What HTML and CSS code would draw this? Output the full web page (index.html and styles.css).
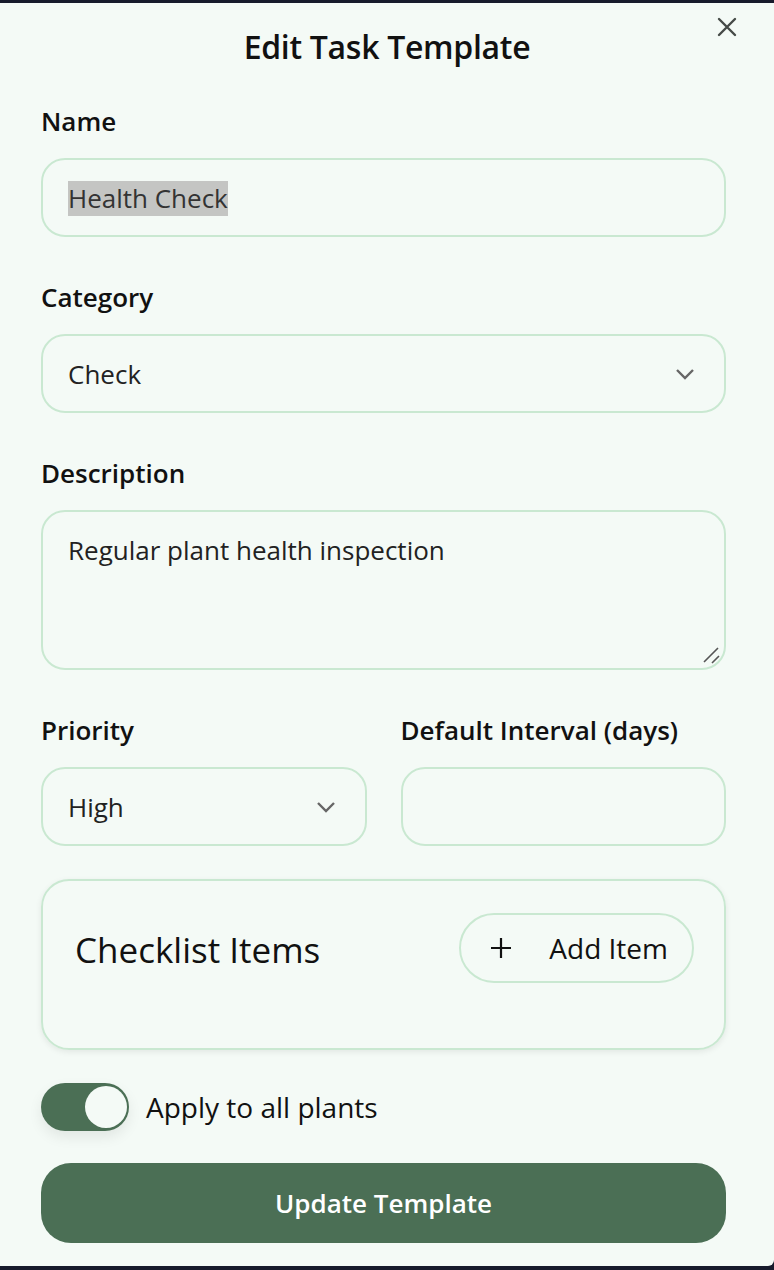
FILE: index.html
```html
<!DOCTYPE html>
<html lang="en">
<head>
<meta charset="utf-8">
<title>Edit Task Template</title>
<link rel="stylesheet" href="styles.css">
</head>
<body>
<div class="dialog">
  <button class="close" aria-label="Close">
    <svg width="24" height="24" viewBox="0 0 24 24"><path d="M4 4 L20 20 M20 4 L4 20" stroke="#454a47" stroke-width="2.4" stroke-linecap="round" fill="none"/></svg>
  </button>
  <h1 class="title">Edit Task Template</h1>
  <form class="form">
    <div class="field">
      <label class="label">Name</label>
      <div class="control"><span class="selected">Health Check</span></div>
    </div>
    <div class="field">
      <label class="label">Category</label>
      <div class="control select"><span>Check</span><svg class="chev" width="22" height="14" viewBox="0 0 22 14"><path d="M3 3 L11 11 L19 3" stroke="#666" stroke-width="2.4" fill="none"/></svg></div>
    </div>
    <div class="field">
      <label class="label">Description</label>
      <div class="control area"><span>Regular plant health inspection</span>
        <svg class="grip" width="20" height="20" viewBox="0 0 20 20"><path d="M2 16 L16 2 M10 17 L17 10" stroke="#555" stroke-width="1.6" fill="none"/></svg>
      </div>
    </div>
    <div class="row">
      <div class="field">
        <label class="label">Priority</label>
        <div class="control select"><span>High</span><svg class="chev" width="22" height="14" viewBox="0 0 22 14"><path d="M3 3 L11 11 L19 3" stroke="#666" stroke-width="2.4" fill="none"/></svg></div>
      </div>
      <div class="field">
        <label class="label">Default Interval (days)</label>
        <div class="control"></div>
      </div>
    </div>
    <div class="card">
      <h2 class="card-title">Checklist Items</h2>
      <button type="button" class="add">
        <svg class="plus" width="22" height="22" viewBox="0 0 22 22"><path d="M11 1 V21 M1 11 H21" stroke="#111" stroke-width="2.2" fill="none"/></svg>
        <span>Add Item</span>
      </button>
    </div>
    <div class="toggle-row">
      <span class="toggle"><span class="knob"></span></span>
      <span class="toggle-label">Apply to all plants</span>
    </div>
    <button type="button" class="submit">Update Template</button>
  </form>
</div>
</body>
</html>
```
FILE: styles.css
```css
html, body {
  margin: 0;
  padding: 0;
}
body {
  background: #171b2c;
  font-family: "Open Sans", "Noto Sans", sans-serif;
  color: #111;
}
.dialog {
  position: relative;
  margin-top: 3px;
  height: 1263px;
  background: #f4faf6;
  border-bottom-right-radius: 6px;
  box-sizing: border-box;
  padding: 22px 48px 0 41px;
}
.close {
  position: absolute;
  top: 12px;
  right: 35px;
  background: none;
  border: 0;
  padding: 0;
  width: 24px;
  height: 24px;
}
.title {
  margin: 0;
  text-align: center;
  font-size: 32px;
  font-weight: 600;
  letter-spacing: -0.3px;
  line-height: 44px;
  color: #111;
  padding-left: 7px;
}
.form {
  display: flex;
  flex-direction: column;
  margin-top: 36px;
}
.field {
  display: flex;
  flex-direction: column;
  margin-bottom: 44px;
}
.label {
  font-size: 26px;
  font-weight: 600;
  line-height: 32px;
  margin-bottom: 21px;
  color: #111;
}
.control {
  height: 79px;
  box-sizing: border-box;
  border: 2px solid #c9e8d1;
  border-radius: 24px;
  display: flex;
  align-items: center;
  padding: 2px 25px 0;
  font-size: 26px;
  color: #333;
  position: relative;
}
.selected {
  background: #c4c5c3;
  line-height: 35px;
}
.select {
  justify-content: space-between;
  color: #222;
  padding-top: 0;
}
.chev {
  margin-right: 3px;
}
.area {
  height: 160px;
  align-items: flex-start;
  padding-top: 20px;
  color: #222;
}
.grip {
  position: absolute;
  right: 2px;
  bottom: 2px;
}
.row {
  display: grid;
  grid-template-columns: 1fr 1fr;
  column-gap: 34px;
}
.row .field {
  margin-bottom: 33px;
}
.card {
  height: 171px;
  box-sizing: border-box;
  border: 2px solid #c9e8d1;
  border-radius: 28px;
  box-shadow: 0 2px 6px rgba(0,0,0,0.08);
  display: flex;
  align-items: flex-start;
  justify-content: space-between;
  padding: 32px 30px 0 32px;
}
.card-title {
  margin: 2px 0 0;
  font-size: 35px;
  font-weight: 500;
  line-height: 70px;
  color: #111;
}
.add {
  height: 70px;
  box-sizing: border-box;
  border: 2px solid #c9e8d1;
  border-radius: 35px;
  background: #f4faf6;
  display: flex;
  align-items: center;
  gap: 37px;
  padding: 0 24px 0 29px;
  font-family: inherit;
  font-size: 28px;
  font-weight: 500;
  color: #111;
}
.toggle-row {
  display: flex;
  align-items: center;
  gap: 17px;
  margin-top: 33px;
}
.toggle {
  width: 88px;
  height: 48px;
  border-radius: 24px;
  background: #4b6f55;
  display: flex;
  align-items: center;
  justify-content: flex-end;
  padding: 0 2px;
  box-sizing: border-box;
  box-shadow: 0 6px 14px rgba(0,0,0,0.08);
}
.knob {
  width: 42px;
  height: 42px;
  border-radius: 50%;
  background: #f4faf6;
}
.toggle-label {
  font-size: 28px;
  font-weight: 500;
  color: #111;
}
.submit {
  margin-top: 32px;
  height: 80px;
  border: 0;
  border-radius: 30px;
  background: #4b6f55;
  color: #fff;
  font-family: inherit;
  font-size: 26px;
  font-weight: 600;
}
```
